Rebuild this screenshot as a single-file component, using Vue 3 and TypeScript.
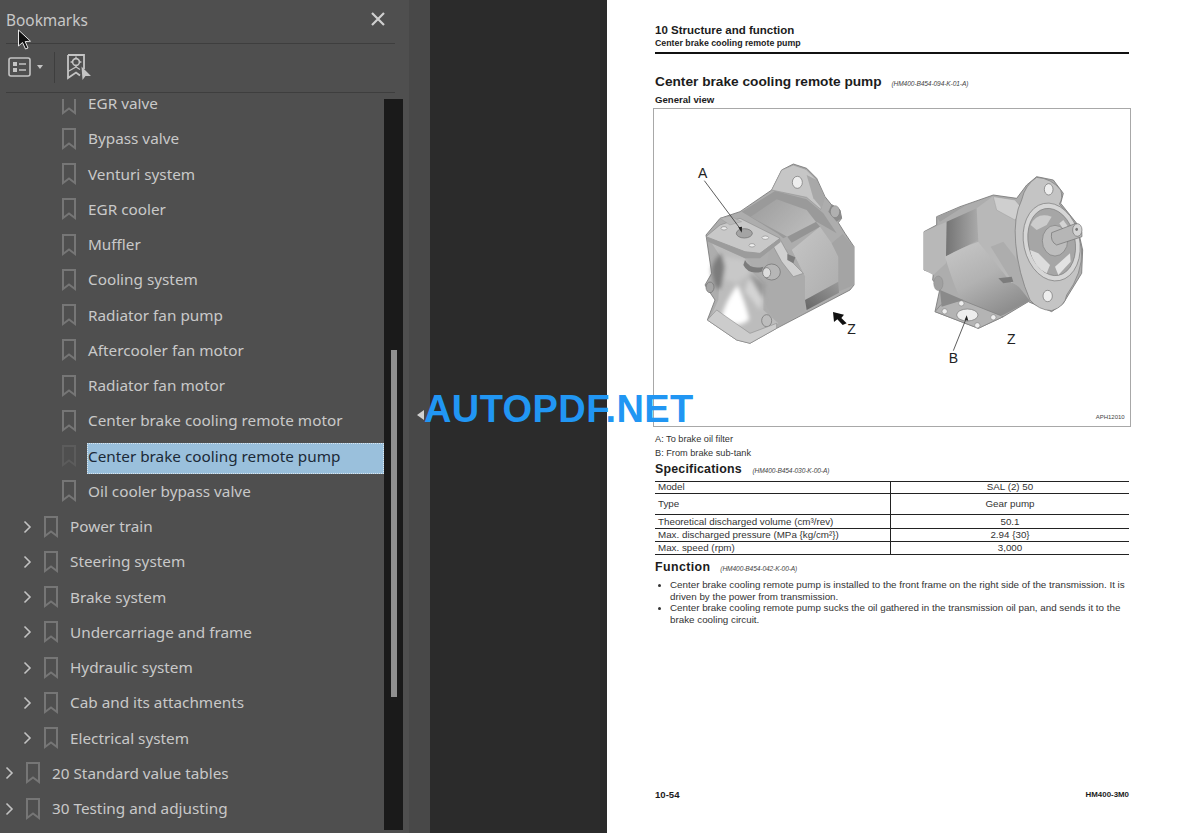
<script setup lang="ts">
interface Row {
  label: string
  level: number
  more?: boolean
  active?: boolean
}

const rows: Row[] = [
  { label: 'EGR valve', level: 2 },
  { label: 'Bypass valve', level: 2 },
  { label: 'Venturi system', level: 2 },
  { label: 'EGR cooler', level: 2 },
  { label: 'Muffler', level: 2 },
  { label: 'Cooling system', level: 2 },
  { label: 'Radiator fan pump', level: 2 },
  { label: 'Aftercooler fan motor', level: 2 },
  { label: 'Radiator fan motor', level: 2 },
  { label: 'Center brake cooling remote motor', level: 2 },
  { label: 'Center brake cooling remote pump', level: 2, active: true },
  { label: 'Oil cooler bypass valve', level: 2 },
  { label: 'Power train', level: 1, more: true },
  { label: 'Steering system', level: 1, more: true },
  { label: 'Brake system', level: 1, more: true },
  { label: 'Undercarriage and frame', level: 1, more: true },
  { label: 'Hydraulic system', level: 1, more: true },
  { label: 'Cab and its attachments', level: 1, more: true },
  { label: 'Electrical system', level: 1, more: true },
  { label: '20 Standard value tables', level: 0, more: true },
  { label: '30 Testing and adjusting', level: 0, more: true },
]

const specs = [
  { name: 'Model', value: 'SAL (2) 50', cls: 'r1' },
  { name: 'Type', value: 'Gear pump', cls: 'r2' },
  { name: 'Theoretical discharged volume (cm³/rev)', value: '50.1', cls: 'r3' },
  { name: 'Max. discharged pressure (MPa {kg/cm²})', value: '2.94 {30}', cls: 'r4' },
  { name: 'Max. speed (rpm)', value: '3,000', cls: 'r4' },
]
</script>

<template>
  <div class="viewer">
    <aside class="panel">
      <header class="panel-head">
        <span class="panel-title">Bookmarks</span>
        <svg class="close" width="16" height="16" viewBox="0 0 16 16">
          <path d="M2 2 L14 14 M14 2 L2 14" stroke="#cfcfcf" stroke-width="2.2" fill="none" />
        </svg>
      </header>
      <div class="toolbar">
        <svg width="23" height="20" viewBox="0 0 23 20">
          <rect x="1" y="1" width="21" height="18" rx="2" fill="none" stroke="#c4c4c4" stroke-width="1.6" />
          <rect x="5" y="5" width="4" height="4" fill="#c4c4c4" />
          <rect x="5" y="11" width="4" height="4" fill="#c4c4c4" />
          <path d="M11 7 H18 M11 13 H18" stroke="#c4c4c4" stroke-width="1.6" />
        </svg>
        <span class="caret"></span>
        <span class="tool-sep"></span>
        <svg width="24" height="26" viewBox="0 0 24 26">
          <path d="M1 1 H17 V15 M1 1 V24 L9 18.5 L13 21.5" fill="none" stroke="#c4c4c4" stroke-width="1.8" />
          <path d="M1 17.5 L9 13 L13 15.5" fill="none" stroke="#c4c4c4" stroke-width="1.2" />
          <circle cx="9" cy="8" r="3.4" fill="none" stroke="#c4c4c4" stroke-width="1.6" />
          <path d="M9 2.6 V4 M9 12 V13.2 M3.6 8 H5 M13 8 H14.4" stroke="#c4c4c4" stroke-width="1.3" />
          <path d="M14.5 12.5 L24 22 L18.5 22 L15.5 26 Z" fill="#c4c4c4" />
        </svg>
      </div>
      <div class="panel-body">
        <div class="tree">
          <div
            v-for="row in rows"
            :key="row.label"
            class="row"
            :class="['lvl-' + row.level, { active: row.active }]"
          >
            <span class="chev">
              <svg v-if="row.more" width="9" height="14" viewBox="0 0 9 14">
                <path d="M1.5 1.5 L7 7 L1.5 12.5" fill="none" stroke="#c2c2c2" stroke-width="1.6" />
              </svg>
            </span>
            <svg class="mark" width="14" height="22" viewBox="0 0 14 22">
              <path d="M1 1 H13 V20 L7 15.5 L1 20 Z" fill="none" stroke-width="2" />
            </svg>
            <span class="label">{{ row.label }}</span>
          </div>
        </div>
        <div class="track"><div class="thumb"></div></div>
      </div>
    </aside>

    <div class="splitter"></div>
    <div class="gutter"></div>

    <main class="page">
      <div class="crumb">10 Structure and function</div>
      <div class="sub-crumb">Center brake cooling remote pump</div>
      <h1 class="title">Center brake cooling remote pump <em class="code code-a">(HM400-B454-094-K-01-A)</em></h1>
      <div class="general">General view</div>

      <figure class="figure">
        <svg viewBox="12 -3 1428 951" width="476" height="317">
          <defs>
            <filter id="soft" x="-5%" y="-5%" width="110%" height="110%">
              <feGaussianBlur stdDeviation="2.2" />
            </filter>
            <filter id="softer" x="-20%" y="-20%" width="140%" height="140%">
              <feGaussianBlur stdDeviation="6" />
            </filter>
            <linearGradient id="band" x1="0" y1="0" x2="1" y2="0.6">
              <stop offset="0" stop-color="#9c9c9c" />
              <stop offset="1" stop-color="#bababa" />
            </linearGradient>
            <linearGradient id="lit" x1="0" y1="0" x2="1" y2="1">
              <stop offset="0" stop-color="#c6c6c6" />
              <stop offset="1" stop-color="#adadad" />
            </linearGradient>
            <linearGradient id="darkband" x1="0" y1="1" x2="1" y2="0">
              <stop offset="0" stop-color="#666" />
              <stop offset="1" stop-color="#9a9a9a" />
            </linearGradient>
            <linearGradient id="sidebody" x1="0" y1="0" x2="0.6" y2="1">
              <stop offset="0" stop-color="#c8c8c8" />
              <stop offset="0.55" stop-color="#b2b2b2" />
              <stop offset="1" stop-color="#8e8e8e" />
            </linearGradient>
            <linearGradient id="topdark" x1="0" y1="0" x2="1" y2="0">
              <stop offset="0" stop-color="#747474" />
              <stop offset="1" stop-color="#aaaaaa" />
            </linearGradient>
          </defs>

          <g filter="url(#soft)">
            <!-- left pump -->
            <path d="M430 162 L470 175 L500 205 L525 260 L545 285 L570 300 L575 325 L565 338 L585 370 L612 410 L612 525 L600 540 L380 655 L300 700 L260 690 L172 630 L195 570 L165 525 L185 490 L168 375 L210 325 L270 305 L365 240 L395 180 Z" fill="#adadad" stroke="#777" stroke-width="2.5" />
            <path d="M365 240 L395 180 L430 165 L468 178 L498 208 L522 262 L512 298 L470 262 Z" fill="#c6c6c6" stroke="#8f8f8f" stroke-width="1.5" />
            <path d="M470 195 L500 210 L525 262 L515 295 L490 265 Z" fill="#a8a8a8" />
            <ellipse cx="442" cy="217" rx="15" ry="18" fill="#eeeeee" stroke="#6f6f6f" stroke-width="2" />
            <path d="M275 305 L375 243 L470 268 L520 310 L560 370 L500 335 L400 385 L385 372 Z" fill="#9a9a9a" />
            <path d="M302 320 L380 268 L470 300 L498 336 L412 380 Z" fill="url(#band)" />
            <path d="M412 380 L498 336 L510 350 L425 398 Z" fill="#949494" />
            <path d="M545 282 L570 300 L575 325 L560 335 L535 305 Z" fill="#8c8c8c" />
            <path d="M425 420 L510 350 L545 400 L565 440 L565 515 L465 570 L465 500 Z" fill="url(#lit)" />
            <path d="M545 400 L578 372 L612 410 L612 525 L565 545 L565 440 Z" fill="#a4a4a4" />
            <path d="M465 570 L565 515 L567 548 L470 600 Z" fill="url(#darkband)" />
            <path d="M360 410 L425 420 L465 500 L465 600 L385 650 L340 570 L350 470 Z" fill="#ababab" />
            <path d="M365 400 L390 388 L430 460 L460 490 L430 500 L395 455 Z" fill="#d0d0d0" stroke="#7f7f7f" stroke-width="1.5" />
            <path d="M412 432 L436 442 L430 460 L412 450 Z" fill="#7c7c7c" />
            <path d="M185 400 L285 445 L300 480 L340 520 L340 600 L385 640 L300 690 L180 625 L205 570 L212 440 Z" fill="#bcbcbc" />
            <g filter="url(#softer)">
              <path d="M212 430 Q175 470 188 500 Q195 545 212 535 L225 470 Z" fill="#7c7c7c" />
              <path d="M225 440 L285 450 L300 490 L262 520 L225 510 Z" fill="#c8c8c8" />
              <path d="M262 525 Q284 570 298 628 Q262 662 214 625 Q222 580 262 525 Z" fill="#ffffff" />
              <path d="M295 510 Q322 515 340 550 L330 600 Q305 565 285 545 Z" fill="#d4d4d4" />
              <path d="M300 490 L345 520 L340 570 L310 520 Z" fill="#979797" />
            </g>
            <path d="M168 380 L210 345 L270 325 L390 385 L330 430 L285 425 Z" fill="#c8c8c8" stroke="#7f7f7f" stroke-width="1.5" />
            <path d="M168 380 L285 425 L330 430 L390 385 L392 396 L330 445 L285 445 L175 395 Z" fill="#9c9c9c" />
            <path d="M210 325 L240 318 L275 335 L240 345 Z" fill="#b8b8b8" stroke="#8f8f8f" />
            <ellipse cx="283" cy="370" rx="24" ry="14" fill="#a4a4a4" stroke="#6a6a6a" stroke-width="2" />
            <ellipse cx="222" cy="355" rx="9" ry="5" fill="#eee" stroke="#777" stroke-width="1.5" />
            <ellipse cx="346" cy="383" rx="10" ry="5" fill="#eee" stroke="#777" stroke-width="1.5" />
            <ellipse cx="306" cy="406" rx="9" ry="5" fill="#eee" stroke="#777" stroke-width="1.5" />
            <path d="M285 450 Q300 480 340 470 L335 485 Q295 495 280 465 Z" fill="#7c7c7c" />
            <ellipse cx="365" cy="486" rx="26" ry="24" fill="#b6b6b6" stroke="#6c6c6c" stroke-width="2" />
            <ellipse cx="350" cy="488" rx="12" ry="15" fill="#dcdcdc" stroke="#6c6c6c" stroke-width="2" />
            <ellipse cx="180" cy="532" rx="12" ry="16" fill="#a5a5a5" stroke="#6c6c6c" stroke-width="2" />
            <ellipse cx="350" cy="632" rx="15" ry="18" fill="#bdbdbd" stroke="#6c6c6c" stroke-width="2" />
            <ellipse cx="555" cy="305" rx="14" ry="18" fill="#b0b0b0" stroke="#777" stroke-width="1.5" />
            <path d="M172 630 L200 600 L300 670 L380 640 L380 655 L300 700 L260 690 Z" fill="#cccccc" stroke="#808080" stroke-width="1.5" />

            <!-- right pump -->
            <path d="M1160 200 L1210 210 L1240 250 L1232 280 L1280 340 L1298 420 L1295 490 L1255 555 L1240 580 L1205 605 L1135 575 L1060 620 L985 655 L855 605 L870 535 L848 510 L850 490 L822 480 L822 365 L860 345 L860 320 L930 290 L1030 255 L1100 265 L1130 225 Z" fill="#adadad" stroke="#777" stroke-width="2.5" />
            <path d="M822 365 L890 335 L888 460 L850 495 L822 480 Z" fill="#b8b8b8" />
            <path d="M890 335 L980 295 L985 390 L888 440 Z" fill="url(#topdark)" />
            <path d="M860 320 L950 285 L925 300 L870 335 Z" fill="#a0a0a0" />
            <path d="M885 440 Q940 410 985 395 Q1060 470 1140 572 L1060 615 Q980 625 945 592 Q915 540 885 440 Z" fill="url(#sidebody)" />
            <path d="M980 295 L1030 258 L1095 275 L1100 510 L1085 520 L985 395 Z" fill="#b8b8b8" />
            <path d="M1022 410 L1060 395 L1095 440 L1130 545 L1090 520 Z" fill="#adadad" />
            <path d="M1045 505 L1085 500 L1090 515 L1060 520 Z" fill="#7c7c7c" />
            <path d="M1030 260 L1095 270 L1120 300 L1095 330 L1040 300 Z" fill="#cfcfcf" stroke="#8f8f8f" />
            <path d="M1160 202 Q1205 205 1232 240 Q1240 265 1228 282 Q1285 340 1295 420 Q1298 490 1250 555 Q1245 590 1205 602 Q1165 600 1140 570 Q1105 490 1097 400 Q1090 320 1115 270 Q1125 225 1160 202 Z" fill="#c4c4c4" stroke="#777" stroke-width="2" />
            <ellipse cx="1196" cy="238" rx="13" ry="17" fill="#eeeeee" stroke="#707070" stroke-width="2" />
            <ellipse cx="1193" cy="558" rx="14" ry="17" fill="#eeeeee" stroke="#707070" stroke-width="2" />
            <ellipse cx="1205" cy="396" rx="84" ry="118" transform="rotate(-12 1205 396)" fill="#d6d6d6" stroke="#7c7c7c" stroke-width="2" />
            <ellipse cx="1205" cy="396" rx="70" ry="102" transform="rotate(-12 1205 396)" fill="#a6a6a6" stroke="#7c7c7c" stroke-width="2" />
            <path d="M1142 345 Q1160 305 1205 320 L1190 345 L1160 360 Z" fill="#cccccc" />
            <path d="M1140 420 Q1150 470 1190 490 L1200 465 L1165 430 Z" fill="#dcdcdc" />
            <path d="M1215 470 L1260 430 L1262 455 L1225 495 Z" fill="#e2e2e2" />
            <path d="M1240 330 L1265 365 L1250 372 L1228 340 Z" fill="#d4d4d4" />
            <ellipse cx="1215" cy="392" rx="38" ry="46" fill="#bdbdbd" stroke="#7c7c7c" stroke-width="2" />
            <path d="M1205 368 L1278 340 Q1298 355 1296 380 L1220 405 Q1200 395 1205 368 Z" fill="#b6b6b6" stroke="#6f6f6f" stroke-width="2" />
            <ellipse cx="1282" cy="360" rx="14" ry="19" fill="#d4d4d4" stroke="#6f6f6f" stroke-width="2" />
            <ellipse cx="1280" cy="358" rx="4" ry="5" fill="#777" />
            <path d="M855 605 L872 585 L935 570 L1060 620 L985 655 Z" fill="#b4b4b4" stroke="#7c7c7c" stroke-width="2" />
            <path d="M870 540 L940 570 L875 590 Z" fill="#8a8a8a" />
            <ellipse cx="865" cy="520" rx="14" ry="22" fill="#a0a0a0" stroke="#7c7c7c" />
            <ellipse cx="952" cy="615" rx="32" ry="18" fill="#ededed" stroke="#777" stroke-width="2" />
            <circle cx="884" cy="604" r="8" fill="#eee" stroke="#777" stroke-width="1.5" />
            <circle cx="934" cy="580" r="8" fill="#eee" stroke="#777" stroke-width="1.5" />
            <circle cx="982" cy="646" r="8" fill="#eee" stroke="#777" stroke-width="1.5" />
            <circle cx="1030" cy="622" r="8" fill="#eee" stroke="#777" stroke-width="1.5" />
          </g>

          <path d="M163 212 L275 362 M910 722 L950 622" fill="none" stroke="#333" stroke-width="2.4" />
          <path d="M275 368 L265 352 L276 350 Z M950 616 L955 632 L944 630 Z" fill="#222" />
          <path d="M549 606 L582 614 L574 624 L590 640 L578 645 L562 628 L552 636 Z" fill="#111" />
          <text x="144" y="205" class="callout">A</text>
          <text x="592" y="672" class="callout">Z</text>
          <text x="896" y="758" class="callout">B</text>
          <text x="1071" y="702" class="callout">Z</text>
          <text x="1337" y="927" class="art-no">APH12010</text>
        </svg>
      </figure>

      <div class="note first">A: To brake oil filter</div>
      <div class="note second">B: From brake sub-tank</div>
      <h2 class="section spec-h">Specifications <em class="code code-b">(HM400-B454-030-K-00-A)</em></h2>
      <div class="spec">
        <div v-for="s in specs" :key="s.name" class="spec-row" :class="s.cls">
          <span class="spec-name">{{ s.name }}</span>
          <span class="spec-value">{{ s.value }}</span>
        </div>
      </div>
      <h2 class="section fn-h">Function <em class="code code-c">(HM400-B454-042-K-00-A)</em></h2>
      <ul class="bullets">
        <li>Center brake cooling remote pump is installed to the front frame on the right side of the transmission. It is driven by the power from transmission.</li>
        <li>Center brake cooling remote pump sucks the oil gathered in the transmission oil pan, and sends it to the brake cooling circuit.</li>
      </ul>
      <footer class="foot">
        <span class="foot-l">10-54</span>
        <span class="foot-r">HM400-3M0</span>
      </footer>
    </main>

    <span class="handle"></span>
    <div class="watermark">AUTOPDF.NET</div>
    <svg class="cursor" width="16" height="22" viewBox="0 0 16 22">
      <path d="M1.5 1 L1.5 17 L5.5 13.5 L8.5 20 L11 19 L8.2 12.6 L13.5 12.2 Z" fill="#111" stroke="#e8e8e8" stroke-width="1" />
    </svg>
  </div>
</template>

<style>
html, body { margin: 0; height: 100%; overflow: hidden; background: #2b2b2b; }
</style>

<style scoped>
.viewer {
  position: relative;
  display: flex;
  width: 1200px; height: 833px;
  overflow: hidden;
  font-family: "Noto Sans", "Open Sans", sans-serif;
}
.panel {
  width: 409px; flex-shrink: 0;
  display: flex; flex-direction: column;
  background: #4f4f4f;
  color: #cdcdcd;
}
.panel-head {
  height: 43px; margin: 0 14px 0 6px;
  display: flex; align-items: center; justify-content: space-between;
  border-bottom: 1px solid #3e3e3e;
}
.panel-title { font-size: 15.4px; color: #c8c8c8; padding-bottom: 3px; }
.close { margin: 0 9px 5px 0; }
.toolbar {
  height: 49px; margin: 0 14px 0 6px;
  display: flex; align-items: center;
  border-bottom: 1px solid #3e3e3e;
  padding: 0 0 2px 2px;
  box-sizing: border-box;
}
.caret {
  margin-left: 6px;
  border-left: 3.5px solid transparent;
  border-right: 3.5px solid transparent;
  border-top: 4px solid #c4c4c4;
}
.tool-sep {
  width: 1px; height: 31px;
  margin: 0 12px 0 11px;
  background: #3e3e3e;
}
.panel-body { flex: 1; display: flex; min-height: 0; }
.tree { width: 384px; margin-top: 6px; overflow: hidden; flex-shrink: 0; }
.row {
  height: 35.25px;
  display: flex; align-items: center;
  font-size: 15.3px;
  white-space: nowrap;
}
.row:first-child { margin-top: -13px; }
.lvl-0 { padding-left: 5px; }
.lvl-1 { padding-left: 23px; }
.lvl-2 { padding-left: 41px; }
.chev { width: 21px; flex-shrink: 0; display: flex; }
.mark { flex-shrink: 0; stroke: #767676; margin-right: 11px; }
.label {
  flex: 1;
  padding-left: 1px;
  line-height: 31px;
  color: #c9c9c9;
}
.active .mark { stroke: #5c5c5c; }
.active .label {
  margin-top: 5px;
  padding-bottom: 4px;
  line-height: 27px;
  background: #9ac0dc;
  color: #1c2a38;
  outline: 1px dotted #dbe6ee;
  outline-offset: -1px;
}
.track {
  width: 19px;
  margin: 6px 0 3px;
  background: #1a1a1a;
}
.thumb {
  width: 6px; height: 347px;
  margin: 251px 0 0 7px;
  background: #8f8f8f;
}
.splitter { width: 21px; flex-shrink: 0; background: #484848; }
.gutter { width: 177px; flex-shrink: 0; background: #2b2b2b; }
.page {
  flex: 1; min-width: 0;
  display: flex; flex-direction: column;
  padding: 24px 71px 0 48px;
  background: #fff;
  color: #1c1c1c;
  font-family: "Liberation Sans", Arial, sans-serif;
}
.crumb { font-size: 11.5px; font-weight: 700; line-height: 13px; }
.sub-crumb {
  font-size: 8.8px; font-weight: 700; line-height: 11px; margin-top: 1px;
  padding-bottom: 2.5px;
  border-bottom: 2px solid #111;
}
.title {
  margin: 19px 0 0;
  font-size: 13.7px; font-weight: 700; line-height: 18px;
  white-space: nowrap;
}
.code { font-size: 6.6px; font-weight: 400; font-style: italic; color: #444; letter-spacing: -0.1px; }
.code-a { margin-left: 6px; }
.code-b { margin-left: 7px; }
.code-c { margin-left: 6px; }
.general { font-size: 9.6px; font-weight: 700; line-height: 12px; margin-top: 1px; }
.figure {
  margin: 2px -2px 0;
  width: 476px; height: 317px;
  border: 1px solid #a8a8a8;
  flex-shrink: 0;
}
.figure svg { display: block; }
.callout { font: 42px "Liberation Sans", Arial, sans-serif; fill: #222; }
.art-no { font: 18px "Liberation Sans", Arial, sans-serif; fill: #444; }
.note { font-size: 9.2px; line-height: 12px; color: #333; }
.first { margin-top: 6px; }
.second { margin-top: 2.5px; }
.section { margin: 0; font-weight: 700; line-height: 14px; white-space: nowrap; }
.spec-h { font-size: 12.4px; margin-top: 3px; letter-spacing: 0.2px; }
.fn-h { font-size: 12.4px; margin-top: 5px; letter-spacing: 0.4px; }
.spec {
  margin-top: 3px;
  border-top: 1px solid #222;
}
.spec-row {
  display: grid;
  grid-template-columns: 236px 1fr;
  box-sizing: border-box;
  border-bottom: 1px solid #222;
  font-size: 9.8px;
  color: #333;
}
.r1 { height: 12px; line-height: 10px; }
.r2 { height: 21px; line-height: 19px; }
.r3 { height: 14px; line-height: 13px; }
.r4 { height: 13px; line-height: 12px; }
.spec-name { padding-left: 3px; border-right: 1px solid #222; }
.spec-value { text-align: center; }
.bullets {
  margin: 3px 0 0;
  padding: 0 0 0 15px;
  font-size: 9.8px;
  line-height: 11.7px;
  color: #333;
}
.bullets li::marker { font-size: 9px; }
.foot {
  margin-top: auto;
  height: 44px;
  display: flex; justify-content: space-between; align-items: flex-start;
  font-weight: 700;
}
.foot-l { font-size: 9.6px; }
.foot-r { font-size: 7.9px; margin-top: 1px; }
.handle {
  position: absolute; left: 417px; top: 410px;
  border-top: 5.5px solid transparent;
  border-bottom: 5.5px solid transparent;
  border-right: 7px solid #d0d0d0;
}
.watermark {
  position: absolute; left: 424px; top: 387px;
  font: 700 38px/44px "Liberation Sans", Arial, sans-serif;
  color: #2196f3;
  letter-spacing: 0.4px;
  white-space: nowrap;
}
.cursor { position: absolute; left: 17px; top: 29px; }
</style>
